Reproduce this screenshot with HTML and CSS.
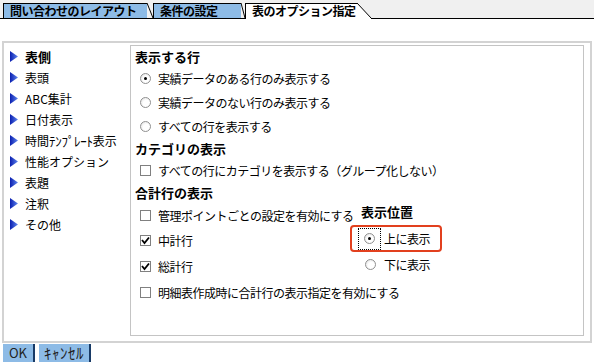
FILE: index.html
```html
<!DOCTYPE html>
<html lang="ja">
<head>
    <meta charset="UTF-8">
    <meta name="viewport" content="width=device-width, initial-scale=1.0">
    <title>表のオプション指定</title>
    <link rel="stylesheet" href="styles.css">
</head>
<body>
    <div class="tabs">
        <div class="tab tab-1">問い合わせのレイアウト</div>
        <svg class="slant" width="6" height="15"><line x1="0" y1="0" x2="6" y2="15" stroke="#000"/></svg>
        <div class="tab tab-2">条件の設定</div>
        <svg class="slant slant-2" width="4" height="15"><line x1="0" y1="0" x2="4" y2="15" stroke="#000"/></svg>
        <div class="tab tab-3 active">表のオプション指定</div>
        <svg class="slant slant-active" width="15" height="16"><polygon points="0,0 14,15 14,16 0,16" fill="#fff"/><line x1="0" y1="0" x2="14.5" y2="15.5" stroke="#000"/></svg>
        <div class="tab-rest"></div>
    </div>

    <div class="panel">
        <ul class="nav">
            <li class="nav-item current"><svg class="arrow" width="8" height="11"><use href="#tri"/></svg>表側</li>
            <li class="nav-item"><svg class="arrow" width="8" height="11"><use href="#tri"/></svg>表頭</li>
            <li class="nav-item"><svg class="arrow" width="8" height="11"><use href="#tri"/></svg>ABC集計</li>
            <li class="nav-item"><svg class="arrow" width="8" height="11"><use href="#tri"/></svg>日付表示</li>
            <li class="nav-item"><svg class="arrow" width="8" height="11"><use href="#tri"/></svg>時間<span class="half">ﾃﾝﾌﾟﾚｰﾄ</span>表示</li>
            <li class="nav-item"><svg class="arrow" width="8" height="11"><use href="#tri"/></svg>性能オプション</li>
            <li class="nav-item"><svg class="arrow" width="8" height="11"><use href="#tri"/></svg>表題</li>
            <li class="nav-item"><svg class="arrow" width="8" height="11"><use href="#tri"/></svg>注釈</li>
            <li class="nav-item"><svg class="arrow" width="8" height="11"><use href="#tri"/></svg>その他</li>
        </ul>

        <div class="options">
            <h2 class="heading">表示する行</h2>
            <div class="row"><span class="radio checked"></span>実績データのある行のみ表示する</div>
            <div class="row"><span class="radio"></span>実績データのない行のみ表示する</div>
            <div class="row"><span class="radio"></span>すべての行を表示する</div>

            <h2 class="heading">カテゴリの表示</h2>
            <div class="row"><span class="check"></span>すべての行にカテゴリを表示する（グループ化しない）</div>

            <h2 class="heading">合計行の表示</h2>
            <div class="sum">
                <div class="sum-left">
                    <div class="row"><span class="check"></span>管理ポイントごとの設定を有効にする</div>
                    <div class="row tall"><span class="check checked"><svg width="9" height="9"><use href="#tick"/></svg></span>中計行</div>
                    <div class="row tall"><span class="check checked"><svg width="9" height="9"><use href="#tick"/></svg></span>総計行</div>
                </div>
                <div class="sum-right">
                    <h2 class="heading sub">表示位置</h2>
                    <div class="highlight">
                        <span class="focus"><span class="radio checked"></span></span>上に表示
                    </div>
                    <div class="row below"><span class="radio"></span>下に表示</div>
                </div>
            </div>
            <div class="row tall"><span class="check"></span>明細表作成時に合計行の表示指定を有効にする</div>
        </div>
    </div>

    <div class="buttons">
        <button class="btn btn-ok">OK</button>
        <button class="btn btn-cancel">ｷｬﾝｾﾙ</button>
    </div>

    <svg width="0" height="0" class="defs">
        <defs>
            <linearGradient id="triFill" x1="0" y1="0" x2="1" y2="0">
                <stop offset="0" stop-color="#0b1fb0"/>
                <stop offset="1" stop-color="#5f86ee"/>
            </linearGradient>
            <symbol id="tri" viewBox="0 0 8 11">
                <polygon points="0,0 8,5.5 0,11" fill="url(#triFill)"/>
            </symbol>
            <symbol id="tick" viewBox="0 0 9 9">
                <polyline points="1,4 3.5,7 8,1.5" fill="none" stroke="#000" stroke-width="1.8"/>
            </symbol>
        </defs>
    </svg>
</body>
</html>
```

FILE: styles.css
```css
*{
    margin: 0;
    padding: 0;
    box-sizing: border-box;
}
body{
    font-family: "Noto Sans CJK JP", "Noto Sans", sans-serif;
    font-size: 12px;
    color: #000;
    background-color: #fff;
    width: 594px;
    height: 362px;
    overflow: hidden;
}
.defs{
    position: absolute;
}

/* tab strip */
.tabs{
    display: flex;
    align-items: flex-end;
    height: 19px;
    padding: 3px 0 0 3px;
    background-color: #f0f0f0;
    border-bottom: 1px solid #000;
}
.tab{
    height: 15px;
    line-height: 14px;
    padding-left: 6px;
    font-weight: bold;
    letter-spacing: -0.5px;
    white-space: nowrap;
    background-color: #8dbbe6;
    border-top: 1px solid #000;
    border-left: 1px solid #000;
}
.tab-1{
    width: 144px;
}
.tab-2{
    width: 88px;
}
.tab-3{
    width: 112px;
}
.tab.active{
    height: 16px;
    margin-bottom: -1px;
    background-color: #fff;
}
.slant{
    display: block;
    flex: none;
}
.slant-active{
    margin-bottom: -1px;
}
.tab-rest{
    flex: 1;
}

/* main panel */
.panel{
    display: flex;
    width: 590px;
    height: 302px;
    margin: 22px 0 0 2px;
    border: 2px solid #d3d3d3;
}
.nav{
    list-style: none;
    width: 126px;
    padding-top: 3px;
}
.nav-item{
    display: flex;
    align-items: center;
    height: 21px;
    padding-left: 6px;
    white-space: nowrap;
}
.nav-item.current{
    font-weight: bold;
    font-size: 13px;
}
.half{
    font-size: 13px;
    letter-spacing: -0.3px;
}
.arrow{
    flex: none;
    margin-right: 7px;
}

.options{
    width: 454px;
    height: 291px;
    margin-top: 2px;
    padding-left: 4px;
    border: 1px solid #c4c4c4;
}
.heading{
    height: 20px;
    line-height: 20px;
    margin-top: 1px;
    font-size: 13px;
    font-weight: bold;
}
.heading + .row{
    margin-top: -1px;
}
.row{
    display: flex;
    align-items: center;
    height: 24px;
    padding-left: 5px;
    letter-spacing: -0.5px;
    white-space: nowrap;
}
.row.tall{
    height: 26px;
}

/* radio and checkbox */
.radio{
    position: relative;
    flex: none;
    width: 11px;
    height: 11px;
    margin-right: 7px;
    border-radius: 50%;
    border: 1px solid #909090;
    background: radial-gradient(circle at 60% 60%, #fff 40%, #dcdcdc 100%);
}
.radio.checked::after{
    content: "";
    position: absolute;
    left: 3px;
    top: 3px;
    width: 3px;
    height: 3px;
    border-radius: 50%;
    background-color: #000;
}
.check{
    display: flex;
    align-items: center;
    justify-content: center;
    flex: none;
    width: 11px;
    height: 11px;
    margin-right: 7px;
    border: 1px solid #808080;
    background-color: #fff;
}

/* total rows block */
.sum{
    display: flex;
}
.sum-left{
    width: 215px;
}
.sum-right{
    width: 120px;
}
.heading.sub{
    height: 22px;
    line-height: 18px;
    margin-top: 0;
    padding-left: 11px;
}
.highlight{
    display: flex;
    align-items: center;
    width: 92px;
    height: 27px;
    padding-left: 6px;
    border: 2px solid #e2401e;
    border-radius: 4px;
    letter-spacing: -0.5px;
    white-space: nowrap;
}
.focus{
    display: flex;
    align-items: center;
    justify-content: center;
    width: 23px;
    height: 22px;
    margin-right: 3px;
    border: 1px dotted #000;
}
.focus .radio{
    margin-right: 0;
}
.row.below{
    padding-left: 15px;
}
.row.below .radio{
    margin-right: 8px;
}

/* bottom buttons */
.buttons{
    display: flex;
    gap: 4px;
    margin: 1px 0 0 3px;
}
.btn{
    height: 18px;
    padding: 0;
    border: none;
    border-right: 2px solid #183a66;
    background-color: #8dbbe6;
    color: #222;
    font-family: "Noto Sans CJK JP", "Noto Sans", sans-serif;
    font-size: 12px;
    line-height: 18px;
}
.btn-ok{
    width: 32px;
    font-size: 13px;
}
.btn-cancel{
    width: 52px;
    font-size: 15px;
    letter-spacing: 0.5px;
}
```
